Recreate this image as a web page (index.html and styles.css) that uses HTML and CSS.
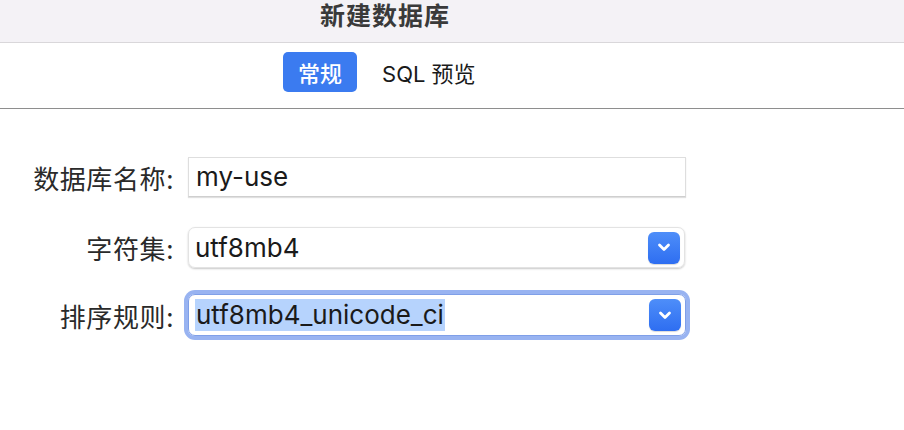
FILE: index.html
```html
<!DOCTYPE html>
<html lang="zh">
<head>
<meta charset="utf-8">
<link rel="stylesheet" href="styles.css">
</head>
<body>
<div class="titlebar"><span class="title">新建数据库</span></div>
<div class="tabs">
  <span class="tab active">常规</span>
  <span class="tab">SQL 预览</span>
</div>
<div class="form">
  <div class="row r1">
    <label class="label">数据库名称:</label>
    <div class="input">my-use</div>
  </div>
  <div class="row r2">
    <label class="label">字符集:</label>
    <div class="select">
      <span class="value">utf8mb4</span>
      <span class="arrow"><svg width="14" height="9" viewBox="0 0 14 9"><path d="M2.5 2 L7 6.5 L11.5 2" fill="none" stroke="#fff" stroke-width="2.8" stroke-linecap="round" stroke-linejoin="round"/></svg></span>
    </div>
  </div>
  <div class="row r3">
    <label class="label">排序规则:</label>
    <div class="select focus">
      <span class="value"><span class="sel">utf8mb4_unicode_ci</span></span>
      <span class="arrow"><svg width="14" height="9" viewBox="0 0 14 9"><path d="M2.5 2 L7 6.5 L11.5 2" fill="none" stroke="#fff" stroke-width="2.8" stroke-linecap="round" stroke-linejoin="round"/></svg></span>
    </div>
  </div>
</div>
</body>
</html>
```
FILE: styles.css
```css
* { box-sizing: border-box; }
body {
  margin: 0;
  background: #ffffff;
  font-family: Inter, "Noto Sans CJK SC", "Noto Sans", sans-serif;
  color: #1d1d1d;
  width: 904px;
  height: 430px;
  overflow: hidden;
}
.titlebar {
  height: 43px;
  background: #f4f2f6;
  border-bottom: 1px solid #d9d7da;
  padding-left: 320px;
  padding-top: 1px;
}
.title {
  display: block;
  font-family: "Noto Sans CJK SC", sans-serif;
  font-weight: 700;
  font-size: 25px;
  line-height: 27px;
  color: #3a3a3a;
  letter-spacing: 1px;
}
.tabs {
  height: 66px;
  border-bottom: 1px solid #8e8e8e;
  display: flex;
  align-items: flex-start;
  padding-left: 283px;
  padding-top: 9px;
  gap: 10px;
}
.tab {
  height: 40px;
  padding: 0 15px;
  display: flex;
  align-items: center;
  font-family: Inter, "Noto Sans CJK SC", sans-serif;
  font-size: 22px;
  color: #1a1a1a;
  border-radius: 5px;
}
.tab.active {
  background: #3b7bf0;
  color: #ffffff;
  font-family: "Noto Sans CJK SC", sans-serif;
  font-weight: 500;
}
.form {
  padding-top: 48px;
}
.row {
  display: flex;
  align-items: center;
}
.r2 { margin-top: 30px; }
.r3 { margin-top: 26px; }
.label {
  width: 174px;
  text-align: right;
  font-family: "Noto Sans CJK SC", sans-serif;
  font-size: 26px;
  letter-spacing: 0.6px;
  color: #2a2a2a;
  margin-right: 14px;
}
.input {
  width: 498px;
  height: 40px;
  border: 1px solid #dedede;
  border-bottom-color: #cfcfcf;
  box-shadow: 0 1px 1px rgba(0,0,0,0.12);
  padding-left: 7px;
  font-size: 26px;
  line-height: 38px;
  color: #1a1a1a;
}
.select {
  width: 497px;
  height: 41px;
  border: 1px solid #e3e3e3;
  border-radius: 7px;
  box-shadow: 0 1px 2px rgba(0,0,0,0.22);
  display: flex;
  align-items: center;
  justify-content: space-between;
  padding: 0 4px 0 6px;
  font-size: 26px;
  color: #1a1a1a;
}
.select.focus {
  height: 42px;
  width: 498px;
  border-color: #7f9fe8;
  box-shadow: 0 0 0 4px #98b3f1;
}
.value {
  display: flex;
  align-items: center;
  height: 32px;
  line-height: 32px;
}
.sel {
  background: #b6d3fd;
  padding: 0 1px;
  height: 32px;
  display: inline-block;
}
.arrow {
  width: 32px;
  height: 32px;
  border-radius: 6px;
  background: linear-gradient(#4e8ef9, #2e6ef1);
  box-shadow: 0 1px 1px rgba(0,0,0,0.15);
  display: flex;
  align-items: center;
  justify-content: center;
}
```
